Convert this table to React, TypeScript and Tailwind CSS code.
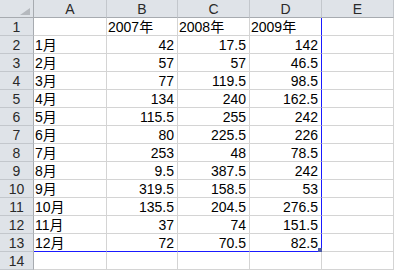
const COLS = ['A', 'B', 'C', 'D', 'E'];
const WIDTHS = ['w-[73px]', 'w-[71px]', 'w-[72px]', 'w-[72px]', 'w-[72px]'];

const ROWS: (string | number)[][] = [
  ['', '2007年', '2008年', '2009年'],
  ['1月', 42, 17.5, 142],
  ['2月', 57, 57, 46.5],
  ['3月', 77, 119.5, 98.5],
  ['4月', 134, 240, 162.5],
  ['5月', 115.5, 255, 242],
  ['6月', 80, 225.5, 226],
  ['7月', 253, 48, 78.5],
  ['8月', 9.5, 387.5, 242],
  ['9月', 319.5, 158.5, 53],
  ['10月', 135.5, 204.5, 276.5],
  ['11月', 37, 74, 151.5],
  ['12月', 72, 70.5, 82.5],
  [],
];

function Cell({ value, col, row }: { value?: string | number; col: number; row: number }) {
  const isNum = typeof value === 'number';
  const inRange = row >= 1 && row <= 13;
  const blueRight = inRange && col === 3;
  const blueBottom = row === 13 && col <= 3;
  return (
    <div
      className={`relative h-[18px] shrink-0 ${WIDTHS[col]} flex items-center border-r border-b ${
        blueRight ? 'border-r-[#1a1aff]' : 'border-r-[#d4d4d4]'
      } ${blueBottom ? 'border-b-[#1a1aff]' : 'border-b-[#d4d4d4]'} ${isNum ? 'justify-end pr-[3px]' : 'pl-px'}`}
    >
      <span className="leading-none pt-px">{value}</span>
      {row === 13 && col === 3 && (
        <div className="absolute right-[-1px] bottom-[-1px] w-[4px] h-[4px] bg-[#4b5aa8]" />
      )}
    </div>
  );
}

export default function App() {
  return (
    <div
      className="w-[394px] h-[271px] bg-white text-[14px] text-black overflow-hidden"
      style={{ fontFamily: '"Liberation Sans", "Noto Sans CJK JP", sans-serif' }}
    >
      <div className="flex">
        <div className="relative w-[34px] h-[18px] shrink-0 bg-[#dfe3e8] border-r border-b border-r-[#a7abb0] border-b-[#a7abb0]">
          <svg className="absolute right-[3px] bottom-[2px]" width="10" height="7" viewBox="0 0 10 7">
            <polygon points="10,0 10,7 0,7" fill="#b5b9be" />
          </svg>
        </div>
        {COLS.map((c, i) => (
          <div
            key={c}
            className={`h-[18px] shrink-0 ${WIDTHS[i]} bg-[#dfe3e8] border-r border-b border-r-[#c3c7cc] border-b-[#a7abb0] flex items-center justify-center text-[#2a2a2a]`}
          >
            <span className="leading-none pt-px">{c}</span>
          </div>
        ))}
      </div>
      {ROWS.map((r, ri) => {
        const row = ri + 1;
        return (
          <div key={row} className="flex">
            <div className="w-[34px] h-[18px] shrink-0 bg-[#dfe3e8] border-r border-b border-r-[#a7abb0] border-b-[#c3c7cc] flex items-center justify-center text-[#2a2a2a]">
              <span className="leading-none pt-px">{row}</span>
            </div>
            {COLS.map((_, ci) => (
              <Cell key={ci} value={r[ci]} col={ci} row={row} />
            ))}
          </div>
        );
      })}
    </div>
  );
}
